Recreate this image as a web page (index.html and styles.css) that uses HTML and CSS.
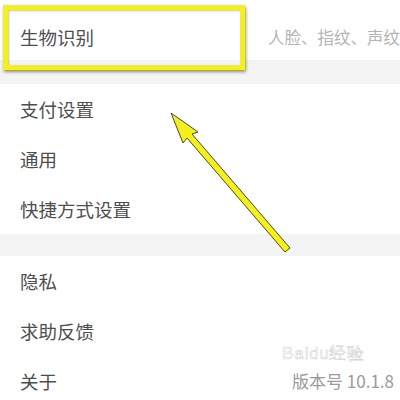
FILE: index.html
```html
<!DOCTYPE html>
<html>
<head>
<meta charset="utf-8">
<link rel="stylesheet" href="styles.css">
</head>
<body>
<div class="page">
  <div class="row first">
    <span class="label">生物识别</span>
    <span class="hint">人脸、指纹、声纹</span>
  </div>
  <div class="gap"></div>
  <div class="row"><span class="label">支付设置</span></div>
  <div class="row"><span class="label">通用</span></div>
  <div class="row"><span class="label">快捷方式设置</span></div>
  <div class="gap small"></div>
  <div class="row"><span class="label">隐私</span></div>
  <div class="row"><span class="label">求助反馈</span></div>
  <div class="row"><span class="label">关于</span><span class="version">版本号 10.1.8</span></div>

  <div class="highlight"></div>
  <svg class="arrow" width="400" height="400" viewBox="0 0 400 400">
    <g fill="#f4f01e" stroke="#4a4a20" stroke-width="1" stroke-linejoin="round">
      <polygon points="171,113 183,143 187,138 285,252 290,248 192,134 198,132"/>
    </g>
  </svg>
  <div class="watermark">Bai<span class="du">du</span>经验</div>
</div>
</body>
</html>
```
FILE: styles.css
```css
* { box-sizing: border-box; }
html, body { margin: 0; padding: 0; background: #fff; }
body {
  width: 400px;
  height: 400px;
  overflow: hidden;
  font-family: "Noto Sans CJK SC", "Noto Sans", sans-serif;
}
.page {
  position: relative;
  width: 400px;
  height: 400px;
  overflow: hidden;
}
.row {
  height: 50px;
  display: flex;
  align-items: center;
  padding-left: 20px;
  background: #fff;
  white-space: nowrap;
}
.row.first {
  height: 60px;
  padding-top: 14px;
}
.label {
  font-size: 18.5px;
  color: #4e4e4e;
  width: 248px;
  flex: none;
}
.hint {
  font-size: 16.5px;
  color: #b4b4b4;
}
.version {
  margin-left: 24px;
  font-size: 17px;
  line-height: 18px;
  color: #9a9a9a;
}
.gap {
  height: 24px;
  background: #f4f4f4;
}
.gap.small { height: 22px; }
.highlight {
  position: absolute;
  left: 3px;
  top: 5px;
  width: 242px;
  height: 65px;
  border: 5px solid #f4f01e;
  box-shadow: 1px 2px 3px rgba(60, 60, 20, 0.55), inset 1px 1px 2px rgba(60,60,20,0.3);
}
.arrow {
  position: absolute;
  left: 0;
  top: 0;
}
.watermark {
  position: absolute;
  left: 282px;
  top: 346px;
  height: 16px;
  line-height: 16px;
  font-family: "Liberation Sans", sans-serif;
  font-size: 17px;
  color: rgba(255,255,255,0.85);
  -webkit-text-stroke: 0.6px #d6d6d6;
  letter-spacing: 1px;
}
.watermark .du { font-size: 16px; }
```
